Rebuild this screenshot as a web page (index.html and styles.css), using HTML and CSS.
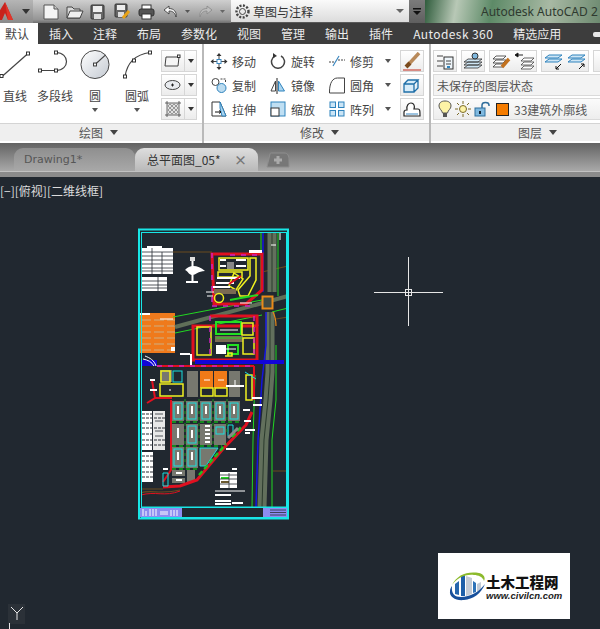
FILE: index.html
```html
<!DOCTYPE html>
<html lang="zh">
<head>
<meta charset="utf-8">
<title>AutoCAD</title>
<link rel="stylesheet" href="styles.css">
</head>
<body>
<div class="app">
  <header class="titlebar">
    <div class="appbtn">
      <svg width="14" height="22" viewBox="0 0 14 22"><path d="M-6 19 L5 1 L13 19 L8 19 L5 12 L2 19Z" fill="#c8221c"/><path d="M5 1 L13 19 L8 19Z" fill="#e2352a"/></svg>
      <svg class="appcaret" width="8" height="5" viewBox="0 0 8 5"><path d="M0 0H8L4 5Z" fill="#333"/></svg>
    </div>
    <div class="qat">
      <svg width="18" height="16" viewBox="0 0 18 16"><path d="M2 1H12L16 5V15H2Z" fill="#f4f4f4" stroke="#555"/><path d="M12 1V5H16" fill="#ccc" stroke="#555"/></svg>
      <svg width="18" height="16" viewBox="0 0 18 16"><path d="M1 14V3H6L8 5H14V14Z" fill="#d8d8d8" stroke="#444"/><path d="M1 14L4 7H17L14 14Z" fill="#f0f0f0" stroke="#444"/></svg>
      <svg width="15" height="16" viewBox="0 0 15 16"><rect x="1" y="1" width="13" height="14" rx="1" fill="#666" stroke="#333"/><rect x="3" y="2" width="9" height="6" fill="#eee"/><rect x="4" y="10" width="7" height="5" fill="#ddd"/></svg>
      <svg width="17" height="17" viewBox="0 0 17 17"><rect x="1" y="1" width="12" height="13" rx="1" fill="#666" stroke="#333"/><rect x="3" y="2" width="8" height="5" fill="#eee"/><rect x="4" y="9" width="6" height="5" fill="#ddd"/><path d="M9 15L15 8" stroke="#e8a317" stroke-width="3"/></svg>
      <svg width="17" height="16" viewBox="0 0 17 16"><rect x="4" y="1" width="9" height="5" fill="#fff" stroke="#333"/><rect x="1" y="5" width="15" height="7" rx="2" fill="#555" stroke="#333"/><rect x="4" y="10" width="9" height="5" fill="#fff" stroke="#333"/></svg>
      <span class="undo">
        <svg width="15" height="13" viewBox="0 0 15 13"><path d="M6 1L1 5L6 9V6C10 6 12 8 13 12C14 7 11 3.500 6 3.500Z" fill="#f4f4f4" stroke="#333" stroke-width=".8"/></svg>
        <svg width="5" height="3" viewBox="0 0 5 3"><path d="M0 0H5L2.500 3Z" fill="#555"/></svg>
      </span>
      <span class="redo">
        <svg width="15" height="13" viewBox="0 0 15 13"><path d="M9 1L14 5L9 9V6C5 6 3 8 2 12C1 7 4 3.500 9 3.500Z" fill="#bdbdbd" stroke="#888" stroke-width=".8"/></svg>
        <svg width="5" height="3" viewBox="0 0 5 3"><path d="M0 0H5L2.500 3Z" fill="#666"/></svg>
      </span>
    </div>
    <div class="workspace">
      <svg width="17" height="17" viewBox="0 0 17 17"><circle cx="8.500" cy="8.500" r="3" fill="none" stroke="#444"/><circle cx="8.500" cy="8.500" r="6" fill="none" stroke="#444" stroke-width="2.400" stroke-dasharray="2 1.500"/></svg>
      <span class="wsname">草图与注释</span>
      <svg width="8" height="4" viewBox="0 0 8 4"><path d="M0 0H8L4 4Z" fill="#666"/></svg>
    </div>
    <div class="wsbtn"><svg width="8" height="7" viewBox="0 0 8 7"><rect width="8" height="1.500" fill="#111"/><path d="M0 3H8L4 7Z" fill="#111"/></svg></div>
    <div class="appname">Autodesk AutoCAD 2</div>
  </header>

  <nav class="tabs">
    <span class="tab active">默认</span><span class="tab">插入</span><span class="tab">注释</span><span class="tab">布局</span><span class="tab">参数化</span><span class="tab">视图</span><span class="tab">管理</span><span class="tab">输出</span><span class="tab">插件</span><span class="tab wide">Autodesk 360</span><span class="tab">精选应用</span>
    <span class="tabend"></span>
  </nav>

  <section class="ribbon">
    <div class="panel draw">
      <div class="panelbody drawbody">
        <div class="tool">
          <svg width="30" height="30" viewBox="0 0 30 30"><path d="M2 27L28 4" class="ln"/><rect x="0" y="25" width="3" height="3" class="nd"/><rect x="26.500" y="2.500" width="3" height="3" class="nd"/></svg>
          <span>直线</span>
        </div>
        <div class="tool">
          <svg width="36" height="30" viewBox="0 0 36 30"><path d="M3 21H19M19 21C33 21 33 3 19 3" class="ln"/><rect x="1.500" y="19.500" width="3" height="3" class="nd"/><rect x="17.500" y="19.500" width="3" height="3" class="nd"/><rect x="17.500" y="1.500" width="3" height="3" class="nd"/></svg>
          <span>多段线</span>
        </div>
        <div class="tool">
          <svg width="32" height="32" viewBox="0 0 32 32"><defs><linearGradient id="cg" x1="0" y1="0" x2="1" y2="1"><stop offset="0" stop-color="#fff"/><stop offset="1" stop-color="#c4cad2"/></linearGradient></defs><circle cx="16" cy="16" r="14.500" fill="url(#cg)" stroke="#444"/><path d="M16 16L27 6" class="ln"/><rect x="14.500" y="14.500" width="3" height="3" class="nd"/></svg>
          <span>圆</span><i class="caret"></i>
        </div>
        <div class="tool arc">
          <svg width="32" height="30" viewBox="0 0 32 30"><path d="M4 27C6 14 14 5 29 3" class="ln"/><rect x="2.500" y="25.500" width="3" height="3" class="nd"/><rect x="27.500" y="1.500" width="3" height="3" class="nd"/><rect x="11.500" y="9.500" width="3" height="3" class="nd"/></svg>
          <span>圆弧</span><i class="caret"></i>
        </div>
        <div class="sidecol">
          <div class="sbtn split"><b><svg width="17" height="14" viewBox="0 0 17 14"><path d="M2 3H15L14 12H1Z" fill="#f5f5f5" stroke="#444"/><rect x="13.500" y="1" width="2.500" height="2.500" class="nd"/></svg></b><em></em></div>
          <div class="sbtn split"><b><svg width="17" height="12" viewBox="0 0 17 12"><ellipse cx="8.500" cy="6" rx="7.500" ry="4.500" fill="#e8ebef" stroke="#444"/><path d="M7 6H10M8.500 4.500V7.500" stroke="#222"/></svg></b><em></em></div>
          <div class="sbtn split"><b><svg width="16" height="16" viewBox="0 0 16 16"><rect x="2" y="2" width="12" height="12" fill="#e2e2e2"/><path d="M0 2H16M0 14H16M2 0V16M14 0V16" stroke="#444" stroke-width=".8" fill="none"/><path d="M3 13L13 3M3 9L9 3M7 13L13 7M3 5L5 3M11 13L13 11M5 3L13 11M3 5L11 13M3 9L7 13M9 3L13 7" stroke="#666" stroke-width=".6" fill="none"/></svg></b><em></em></div>
        </div>
      </div>
      <footer class="paneltitle t-draw">绘图<i class="caret dark"></i></footer>
    </div>

    <div class="panel modify">
      <div class="panelbody modbody">
        <div class="modgrid">
          <div class="mod"><svg width="17" height="17" viewBox="0 0 17 17"><path d="M8.500 1V16M1 8.500H16" stroke="#444"/><path d="M8.500 0L6 3H11ZM8.500 17L6 14H11ZM0 8.500L3 6V11ZM17 8.500L14 6V11Z" fill="#333"/><rect x="6.500" y="6.500" width="4" height="4" fill="#fff" stroke="#3a87c0"/></svg><span>移动</span></div>
          <div class="mod"><svg width="16" height="16" viewBox="0 0 16 16"><path d="M5 3A6.500 6.500 0 1 0 11 3" fill="none" stroke="#444" stroke-width="1.500"/><path d="M3 0L7 3L3 5Z" fill="#333"/></svg><span>旋转</span></div>
          <div class="mod"><svg width="18" height="12" viewBox="0 0 18 12"><path d="M1 7H6M10 5H17" stroke="#444" stroke-dasharray="2 1"/><path d="M5 11L11 1" stroke="#3a87c0" stroke-width="1.200"/></svg><span>修剪</span><i class="caret"></i></div>
          <div class="mod"><svg width="17" height="17" viewBox="0 0 17 17"><circle cx="5" cy="5" r="3.500" fill="#fff" stroke="#444"/><circle cx="11" cy="11" r="4.500" fill="#bcdcf0" stroke="#2f83bd"/><path d="M10 2H15V6" stroke="#444" fill="none" stroke-dasharray="2 1"/></svg><span>复制</span></div>
          <div class="mod"><svg width="16" height="17" viewBox="0 0 16 17"><path d="M7 1V17" stroke="#222"/><path d="M5.500 14H1L5.500 4Z" fill="#fff" stroke="#444"/><path d="M8.500 14H14.500L8.500 4Z" fill="#a9d4ef" stroke="#2f83bd"/></svg><span>镜像</span></div>
          <div class="mod"><svg width="17" height="17" viewBox="0 0 17 17"><path d="M16 1H9C4 1 1 6 1 15V16H16Z" fill="#fff" stroke="#444"/></svg><span>圆角</span><i class="caret"></i></div>
          <div class="mod"><svg width="16" height="16" viewBox="0 0 16 16"><path d="M1 1H9L15 15H1Z" fill="#fff" stroke="#333"/><path d="M9 1L15 15H11L9 7Z" fill="#a9d4ef" stroke="#2f83bd"/><path d="M4 11H10M8 9.500L10 11L8 12.500" stroke="#111" fill="none"/></svg><span>拉伸</span></div>
          <div class="mod"><svg width="16" height="16" viewBox="0 0 16 16"><rect x="1" y="1" width="14" height="14" fill="#bfdff3" stroke="#2f83bd"/><rect x="1" y="7" width="8" height="8" fill="#fff" stroke="#333"/></svg><span>缩放</span></div>
          <div class="mod"><svg width="16" height="16" viewBox="0 0 16 16"><g fill="#cbe5f6" stroke="#2f83bd"><rect x="1" y="1" width="5.500" height="5.500"/><rect x="9.500" y="1" width="5.500" height="5.500"/><rect x="1" y="9.500" width="5.500" height="5.500"/><rect x="9.500" y="9.500" width="5.500" height="5.500"/></g></svg><span>阵列</span><i class="caret"></i></div>
        </div>
        <div class="sidecol narrow">
          <div class="sbtn"><svg width="20" height="19" viewBox="0 0 20 19"><path d="M17 1L6 13" stroke="#b98a5a" stroke-width="3.500"/><path d="M8 11L4 15" stroke="#7a4a1c" stroke-width="4"/><path d="M1 18H19" stroke="#c42a1c"/></svg></div>
          <div class="sbtn"><svg width="18" height="16" viewBox="0 0 18 16"><path d="M1 7H11V15H1ZM1 7L5 3H15L11 7M15 3V11L11 15" fill="#d7ecf9" stroke="#1f6fa8" stroke-width="1.300"/></svg></div>
          <div class="sbtn"><svg width="18" height="15" viewBox="0 0 18 15"><path d="M1 14V10C1 8 3 8 4 8C3 3 6 1 8 1C11 1 12 4 11 7H15C17 7 17 9 17 14Z" fill="#fff" stroke="#222" stroke-width="1.200"/><path d="M3 12H15" stroke="#3a87c0"/></svg></div>
        </div>
      </div>
      <footer class="paneltitle t-mod">修改<i class="caret dark"></i></footer>
    </div>

    <div class="panel layers">
      <div class="panelbody laybody">
        <div class="layrow">
          <div class="sbtn"><svg width="18" height="18" viewBox="0 0 18 18"><rect x="8" y="5" width="9" height="12" fill="#eef5fa" stroke="#333"/><path d="M1 4H7M1 9H7M1 14H7M10 9H15M10 12H15" stroke="#444"/><rect x="11" y="14" width="3" height="2" fill="#2f83bd"/></svg></div>
          <div class="sbtn"><svg width="20" height="18" viewBox="0 0 20 18"><path d="M1 16L5 13H19L15 16ZM1 13L5 10H19L15 13ZM1 10L5 7H19L15 10Z" fill="#cfe6f5" stroke="#333" stroke-width=".8"/><circle cx="12" cy="4" r="3" fill="#7fb7dd" stroke="#333"/></svg></div>
          <div class="sbtn joined"><svg width="20" height="18" viewBox="0 0 20 18"><path d="M1 7L4 4H14L11 7ZM1 11L4 8H14L11 11ZM1 15L4 12H14L11 15Z" fill="#fff" stroke="#333" stroke-width=".8"/><path d="M10 15L17 7" stroke="#c2711e" stroke-width="3.500"/></svg><svg width="20" height="18" viewBox="0 0 20 18"><path d="M3 1L0 3L3 5ZM3 3H8" stroke="#222"/><path d="M6 9L9 6H19L16 9ZM6 13L9 10H19L16 13ZM6 17L9 14H19L16 17Z" fill="#fff" stroke="#444" stroke-width=".8"/></svg></div>
          <div class="sbtn joined"><svg width="20" height="18" viewBox="0 0 20 18"><path d="M1 6L5 3H18L14 6ZM1 10L5 7H18L14 10Z" fill="#cfe6f5" stroke="#2f83bd"/><path d="M17 12L12 17M12 14V17H15" stroke="#111" fill="none"/></svg><svg width="20" height="18" viewBox="0 0 20 18"><path d="M1 6L5 3H18L14 6ZM1 10L5 7H18L14 10Z" fill="#cfe6f5" stroke="#2f83bd"/><path d="M12 17L17 12M14 12H17V15" stroke="#111" fill="none"/></svg></div>
          <div class="sbtn last"></div>
        </div>
        <div class="laycombo">未保存的图层状态</div>
        <div class="laycombo state">
          <svg width="14" height="18" viewBox="0 0 14 18"><path d="M7 1C3 1 1 3 1 6C1 9 4 10 4.500 13H9.500C10 10 13 9 13 6C13 3 11 1 7 1Z" fill="#fdf3a6" stroke="#555"/><rect x="5" y="13" width="4" height="4" fill="#555"/></svg>
          <svg width="16" height="16" viewBox="0 0 16 16"><circle cx="8" cy="8" r="3.500" fill="#fdf3a6" stroke="#7b6b2a"/><path d="M8 0V3M8 13V16M0 8H3M13 8H16M2 2L4 4M12 12L14 14M14 2L12 4M4 12L2 14" stroke="#7b6b2a"/></svg>
          <svg width="17" height="16" viewBox="0 0 17 16"><path d="M8 7V4C8 0.500 15 0.500 15 4V5" fill="none" stroke="#2f6e9c" stroke-width="1.500"/><rect x="1" y="7" width="10" height="8" fill="#7fb9e0" stroke="#2f6e9c"/><rect x="5" y="10" width="2" height="3" fill="#123"/></svg>
          <span class="swatch"></span>
          <span class="layname">33建筑外廓线</span>
        </div>
      </div>
      <footer class="paneltitle t-lay">图层<i class="caret dark"></i></footer>
    </div>
  </section>

  <div class="docbar">
    <div class="doctab">Drawing1*</div>
    <div class="doctab current"><span>总平面图_05*</span><span class="close">×</span></div>
    <svg class="newtab" width="24" height="16" viewBox="0 0 24 16"><path d="M1 15L4 2C4 1 5 1 6 1H18C22 1 23 4 23 8V15Z" fill="#777" stroke="#8e8e8e"/><path d="M12 4V12M8 8H16" stroke="#aaa" stroke-width="3"/></svg>
  </div>
  <div class="docstrip"></div>

  <main class="viewport">
    <div class="viewlabel">[−][俯视][二维线框]</div>
    <svg class="plan" width="600" height="452" viewBox="0 177 600 452">
      <!-- crosshair -->
      <path d="M374 292.500H443M408.500 257V326" class="cross"/>
      <rect x="405.500" y="289.500" width="6" height="6" class="crossbox"/>

      <!-- UCS -->
      <rect x="8" y="604" width="17" height="20" fill="#2b3138"/>
      <path d="M11 607L17 613L23 607M17 613V620M9.500 623V629" class="cross"/>

      <!-- tables and white notes -->
      <rect x="141" y="248" width="32" height="26" fill="#fff"/>
      <rect x="147" y="246" width="15" height="2" fill="#fff"/>
      <path d="M141 252H173M141 256H173M141 260H173M141 264H173M141 268H173M141 271H173M152 248V274M162 252V274" class="darkln"/>
      <rect x="141" y="277" width="26" height="14" fill="#fff"/>
      <path d="M141 281H167M141 285H167M141 288H167M158 277V291" class="darkln"/>
      <rect x="142" y="411" width="10" height="39" fill="#fff"/>
      <rect x="153" y="411" width="12" height="39" fill="#e8e8e8"/>
      <rect x="142" y="452" width="11" height="30" fill="#fff"/>
      <path d="M142 414H152M142 418H165M142 423H152M142 428H165M142 434H152M142 440H165M142 445H165M142 456H153M142 461H153M142 467H153M142 472H153M142 477H153" class="darkdash"/>
      <path d="M155 414H163M155 421H163M155 431H163M155 436H163" class="darkln"/>

      <!-- orange schedule -->
      <rect x="140" y="313" width="35" height="40" fill="#ef7a1c"/>
      <path d="M141 320H175M141 326H175M141 332H175M141 338H175M141 344H175M141 350H175" class="orangeln"/>
      <rect x="171" y="347" width="4" height="4" fill="#fff"/>
      <rect x="140" y="313" width="10" height="2" fill="#fff"/>
      <path d="M160 319H173" class="wht1"/>

      <!-- north arrow -->
      <path d="M192.500 258V282M186 282H198" class="wht2"/>
      <rect x="190" y="257" width="5" height="4" fill="#ddd"/>
      <path d="M185 270C190 264 198 265 205 271C198 271 196 275 192 275C189 275 188 271 185 270Z" fill="#fff"/>

      <!-- terrain lines -->
      <path d="M173 252H212M262 272L288 266M270 320L288 317M273 471H286" class="brown"/>
      <path d="M175 327L288 296" class="roadband"/>
      <path d="M173 317L262 300M175 333L262 315M272 312L288 308" class="grn1"/>

      <!-- main vertical road -->
      <path d="M272 232V292M270 312V372L268 400L264 440L262 507" class="roadwide"/>
      <path d="M272 232V292M270 312V372L268 400L264 440L262 507" class="roadmark"/>
      <path d="M261 232V290M255 375L253 440L252 507M278 232V296M276 345V400L272 440L272 507" class="grn1"/>
      <path d="M263 232V292M266 312V345L262 380L258 440L256 507" class="blue2"/>
      <path d="M280 232V240M271 245H276" class="wht1"/>

      <!-- top block -->
      <path d="M212 254H262V290L246 304H214Z" class="redthick3"/>
      <path d="M219 258H248V270H219Z" class="yel"/>
      <rect x="227" y="262" width="7" height="7" fill="#888"/>
      <path d="M220 260H226M236 260H246M220 266H226M236 266H246" class="wht2"/>
      <rect x="218" y="272" width="24" height="5" class="yel"/>
      <path d="M250 258H256V280L248 296H240L238 290L250 276Z" class="yel"/>
      <path d="M234 273L243 279L236 290L229 286Z" class="yel"/>
      <path d="M217 278H240M216 283H234M213 287H230" class="wht2"/>
      <rect x="214" y="289" width="22" height="5" fill="#7a6a52"/>
      <circle cx="219" cy="298" r="4.500" class="yel"/>
      <path d="M206 292H214M207 296H213M240 303H252" class="wht1"/>
      <path d="M230 300L258 295" class="grn2"/>
      <path d="M229 284L241 276" class="redthick"/>
      <path d="M212 253V306M212 306H250" class="mag"/>
      <rect x="249" y="250" width="13" height="3" fill="#fff"/>
      <path d="M230 255H262" class="mag"/>

      <!-- intersection -->
      <rect x="262.500" y="296.500" width="10" height="12" class="orangebox"/>
      <path d="M273 312C276 318 276 322 276 326" class="orangeln2"/>

      <!-- middle block -->
      <rect x="193" y="326" width="64" height="34" class="redthick3"/>
      <path d="M210 316H257V326" class="redthick3"/>
      <rect x="197" y="327" width="14" height="28" class="yel"/>
      <rect x="216" y="322" width="25" height="12" class="grnbox"/>
      <rect x="215" y="336" width="28" height="6" fill="#7a6a52"/>
      <path d="M216 338H242" class="grn1"/>
      <rect x="242" y="323" width="11" height="12" class="yel"/>
      <rect x="216" y="345" width="10" height="9" fill="#fff"/>
      <rect x="228" y="345" width="10" height="9" class="grnbox"/>
      <path d="M243 338H254V354H243Z" class="yel"/>
      <path d="M225 356H232V353H228V356" class="yel"/>
      <path d="M210 316V360M254 316V360" class="mag"/>
      <path d="M220 330H238M222 349H236" class="wht1"/>

      <!-- blue band -->
      <path d="M195 362H284" class="blue4"/>
      <rect x="141" y="360" width="16" height="6" fill="#1205d8"/>
      <path d="M145 356C150 358 154 360 156 366M143 359C148 360 152 362 154 366" class="wht1"/>
      <path d="M180 354H190M191 354V366" class="wht2"/>

      <!-- row 1 -->
      <path d="M157 366H254" class="redthick"/>
      <path d="M254 366V400" class="redthick"/>
      <path d="M157 366H254" class="mag"/>
      <g class="gry"><rect x="187" y="371" width="11" height="26"/><rect x="229" y="371" width="11" height="26"/><rect x="160" y="370" width="12" height="12"/></g>
      <rect x="200" y="371" width="13" height="17" fill="#f07a18"/>
      <rect x="214" y="371" width="13" height="17" fill="#f07a18"/>
      <rect x="201" y="388" width="12" height="8" class="yel"/>
      <rect x="215" y="388" width="12" height="8" class="yel"/>
      <rect x="160" y="384" width="23" height="12" class="yel"/>
      <rect x="161" y="371" width="9" height="11" class="yel"/>
      <rect x="173" y="371" width="9" height="11" class="cyn"/>
      <path d="M204 380H210M218 380H224M170 389V391M235 380V386" class="wht1"/>
      <path d="M226 386H244" class="wht2"/>
      <path d="M246 375H252V400H246Z" class="yel"/>
      <path d="M245 372L256 379" class="cyn"/>

      <!-- rows 2 to 5 -->
      <g class="gry">
        <rect x="172" y="401" width="12" height="20"/><rect x="186" y="401" width="12" height="20"/><rect x="200" y="401" width="12" height="20"/><rect x="214" y="401" width="12" height="20"/><rect x="228" y="401" width="12" height="20"/>
        <rect x="172" y="424" width="12" height="21"/><rect x="186" y="424" width="12" height="21"/><rect x="200" y="424" width="12" height="21"/><rect x="214" y="424" width="12" height="21"/>
        <rect x="172" y="447" width="12" height="21"/><rect x="186" y="447" width="12" height="21"/>
        <path d="M200 448H218L206 466H200Z"/>
        <rect x="172" y="470" width="13" height="6"/><rect x="172" y="478" width="13" height="5"/><rect x="187" y="470" width="8" height="12"/>
      </g>
      <g class="cyn">
        <rect x="174" y="403" width="8" height="16"/><rect x="188" y="403" width="8" height="16"/><rect x="202" y="403" width="8" height="16"/><rect x="216" y="403" width="8" height="16"/><rect x="230" y="403" width="8" height="16"/>
        <rect x="188" y="426" width="8" height="17"/><rect x="216" y="427" width="8" height="7"/>
        <rect x="174" y="449" width="8" height="17"/><rect x="188" y="449" width="8" height="17"/>
        <path d="M200 448H218L206 466H200Z"/>
        <path d="M228 425H233V436H228Z"/>
      </g>
      <path d="M178 406V414M192 406V414M206 406V414M220 406V414M234 406V414M178 428V438M192 430V438M178 452V460M192 452V460M205 426H210M205 430H210M205 434H210M205 438H210M205 442H210M176 473H182M176 480H182" class="wht2"/>
      <path d="M172 422H240M172 446H222M172 469H198" class="grn2dash"/>
      <path d="M171 400V470L163 482" class="redthick"/>
      <path d="M185 399V470M199 399V448M213 399V445M227 399V435" class="grn1dash"/>

      <!-- red diagonal boundary -->
      <path d="M163 487L180 486L197 480L222 450L246 425L252 412" class="redthick3"/>
      <path d="M199 475L226 444M232 437L242 426" class="grn3"/>
      <path d="M228 438L238 428" class="gryln"/>
      <path d="M152 380L155 398L147 403M155 398L172 398" class="redthick"/>
      <path d="M150 380H155M150 390H157" class="wht2"/>
      <path d="M163 473V486H168V473Z" class="cyn"/>
      <path d="M141 489H163M141 493C150 489 160 495 180 490" class="brown"/>
      <path d="M141 495C155 491 165 497 180 491" class="redthin"/>

      <!-- small white labels -->
      <path d="M252 398H262M253 405H262M243 410H250M244 421H251M236 449H226M245 430H255M245 433H250M232 469H237M163 469H168" class="wht2"/>

      <!-- legend -->
      <rect x="220" y="472" width="17" height="16" fill="#fff"/>
      <path d="M221 478H229" class="grn2"/>
      <path d="M221 482H229" class="brown2"/>
      <path d="M229 473V488M220 475H237M220 479H237M220 484H237" class="darkln"/>
      <path d="M215 491H245" class="wht1"/>
      <path d="M215 495H231M215 501H231M215 504H231M232 503H243" class="wht2"/>

      <!-- frame -->
      <rect x="139" y="229.500" width="149" height="289" class="frame2"/>
      <rect x="141.500" y="232.500" width="145" height="274.500" class="frame1"/>
      <path d="M141 507.500H287M141 517.500H287" class="frame1"/>

      <!-- title block -->
      <rect x="140" y="508" width="42" height="9" fill="#8c8cf0"/>
      <path d="M143 509V516M146 511V516M150 509V516M153 509V516M156 509V516M160 512H168M160 514H168M171 510V516M174 510V516M177 510V516" class="wht1"/>
      <rect x="263" y="508" width="24" height="9" fill="#8c8cf0"/>
      <path d="M270 510H286M270 512.500H286M270 515H286" class="darkln"/>
    </svg>

    <aside class="watermark">
      <svg class="wmlogo" width="37" height="30" viewBox="0 0 37 30">
        <path d="M6 22V12L10 9V23Z" fill="#2566ad"/><path d="M12 24V4L16 3V24Z" fill="#1d5fa9"/><path d="M17 4L23 6V22L17 24Z" fill="#c4ccd6"/><path d="M24 21V9L27 11V20Z" fill="#2f73b8"/><path d="M28 20V12L32 10V17Z" fill="#c4ccd6"/>
        <path d="M3 13C8 3 18 -1 30 1C34 2 37 5 35 9C34 5 29 3 25 3C16 2 8 6 3 13Z" fill="#8cba2c"/>
        <path d="M1 19C0 25 7 29 15 28C24 27 32 22 36 12C30 20 21 25 12 25C6 25 2 22 3 14C2 15 1 17 1 19Z" fill="#174f9b"/>
      </svg>
      <div class="wmtext"><strong>土木工程网</strong><em>www.civilcn.com</em></div>
    </aside>
  </main>
</div>
</body>
</html>
```

FILE: styles.css
```css
* { box-sizing: border-box; }
html, body { margin: 0; padding: 0; background: #212830; }
body { font-family: "Noto Sans CJK SC", "Liberation Sans", sans-serif; font-size: 12px; color: #444; }
.app { width: 600px; height: 629px; overflow: hidden; display: flex; flex-direction: column; }

/* title bar */
.titlebar { height: 23px; display: flex; align-items: stretch; background: #5a5a5a; flex: none; }
.appbtn { width: 33px; display: flex; align-items: center; gap: 8px; background: linear-gradient(#b5b5b5, #8a8a8a); }
.qat { width: 198px; display: flex; align-items: center; padding-left: 9px; gap: 6px; background: linear-gradient(#cfcfcf, #959595 85%, #6e6e6e); }
.qat svg { flex: none; }
.qat > svg:nth-child(4) { margin-left: 3px; }
.qat > svg:nth-child(5) { margin-left: 1px; }
.undo, .redo { display: flex; align-items: center; gap: 7px; }
.undo { margin-left: 2px; }
.redo { margin-left: 2px; }
.workspace { width: 178px; height: 22px; display: flex; align-items: center; padding: 0 5px 0 3px; gap: 2px; background: linear-gradient(#fafafa, #dcdcdc); }
.wsname { flex: 1; font-size: 12px; color: #333; }
.wsbtn { width: 16px; display: flex; align-items: center; justify-content: center; background: linear-gradient(#7b7b7b, #5f5f5f); }
.appname { flex: 1; padding-left: 56px; line-height: 23px; color: #2f3a30; font-family: "Noto Sans", sans-serif; font-size: 12px; white-space: nowrap; overflow: hidden; background: linear-gradient(100deg, #2f5c3c, #b8c8b6 18%, #5d8a67 38%, #a8b9a4 70%, #6d8a70); }

/* ribbon tabs */
.tabs { height: 21px; flex: none; display: flex; align-items: stretch; background: #3d3d3d; color: #ececec; line-height: 21px; }
.tab { margin-right: 20px; white-space: nowrap; }
.tab.wide { letter-spacing: .42px; }
.tab.active { width: 38px; margin: 0 11px 0 0; padding-left: 5px; background: #fff; color: #444; }
.tabend { position: relative; flex: 1; }
.tabend::after { content: ""; position: absolute; right: 0; top: 9px; width: 7px; height: 5px; background: #e8e8e8; border-radius: 2px 0 0 2px; }

/* ribbon */
.ribbon { height: 99px; flex: none; display: flex; background: #fff; }
.panel { display: flex; flex-direction: column; border-right: 2px solid #b9b9b9; }
.panel.draw { width: 204px; }
.panel.modify { width: 227px; }
.panel.layers { flex: 1; border-right: 0; min-width: 0; }
.panelbody { height: 81px; display: flex; }
.paneltitle { flex: 1; display: flex; align-items: center; background: #efefef; border-top: 1px solid #d4d4d4; border-bottom: 2px solid #fff; color: #555; gap: 7px; }
.t-draw { padding-left: 79px; }
.t-mod { padding-left: 96px; }
.t-lay { padding-left: 87px; }

.drawbody { padding-top: 5px; }
.tool { width: 50px; display: flex; flex-direction: column; align-items: center; }
.tool:nth-child(1) { width: 30px; }
.tool:nth-child(3) { width: 30px; }
.tool:nth-child(4) { width: 51px; padding-left: 3px; }
.tool svg { height: 31px; }
.tool span { line-height: 18px; margin-top: 7px; white-space: nowrap; }
.caret { display: block; width: 0; height: 0; border: 3px solid transparent; border-top: 4px solid #555; border-bottom: 0; }
.caret.dark { border-width: 4px; border-top-width: 5px; border-bottom-width: 0; border-top-color: #444; }
.tool .caret { margin-top: 3px; }
.ln { fill: none; stroke: #444; stroke-width: 1.200; }
.nd { fill: #fff; stroke: #333; stroke-width: 1; }

.sidecol { display: flex; flex-direction: column; gap: 2px; padding-top: 1px; }
.sbtn { width: 36px; height: 22px; flex: none; display: flex; align-items: center; justify-content: center; border: 1px solid #d6d6d6; background: linear-gradient(#fff, #ececec); }
.sbtn.split { display: grid; grid-template-columns: 23px 12px; }
.sbtn.split b { height: 20px; display: flex; align-items: center; justify-content: center; border-right: 1px solid #d6d6d6; }
.sbtn.split em { width: 0; height: 0; margin-left: 3px; border: 3px solid transparent; border-top: 4px solid #333; border-bottom: 0; }
.sidecol.narrow { margin-top: 6px; margin-left: 7px; padding-top: 0; }
.sidecol.narrow .sbtn { width: 24px; }

.modbody { padding-left: 6px; }
.modgrid { display: grid; grid-template-columns: 59px 59px 1fr; grid-template-rows: repeat(3, 24px); width: 183px; margin-top: 5px; }
.mod { display: flex; align-items: center; gap: 4px; white-space: nowrap; }
.mod svg { width: 18px; flex: none; }
.mod .caret { margin-left: 7px; }

.laybody { flex-direction: column; padding: 6px 0 0 2px; gap: 2px; }
.layrow { display: flex; gap: 4px; height: 22px; }
.layrow .sbtn { width: 24px; flex: none; }
.layrow .sbtn.joined { width: 48px; gap: 3px; }
.layrow .sbtn.last { width: 24px; }
.laycombo { height: 22px; width: 180px; display: flex; align-items: center; padding-left: 3px; border: 1px solid #dadada; background: #f3f3f3; color: #555; white-space: nowrap; }
.laycombo.state { gap: 3px; padding-left: 4px; background: linear-gradient(#fbfbfb, #ededed); }
.swatch { width: 13px; height: 13px; background: #f57c00; border: 1px solid #222; flex: none; margin-left: 2px; }
.layname { margin-left: 2px; }

/* document tabs */
.docbar { height: 28px; flex: none; display: flex; align-items: flex-end; padding-left: 14px; background: linear-gradient(#636363, #a9a9a9); }
.doctab { width: 121px; height: 23px; padding-left: 10px; line-height: 23px; border-radius: 9px 9px 0 0; background: linear-gradient(#8f8f8f, #a8a8a8); color: #565656; font-family: "DejaVu Sans", sans-serif; font-size: 11px; }
.doctab.current { width: 123px; display: flex; justify-content: space-between; padding: 0 11px 0 12px; background: linear-gradient(#dedede, #b9b9b9); color: #333; font-family: "Noto Sans CJK SC", sans-serif; font-size: 12px; }
.close { color: #777; font-weight: 700; font-size: 13px; }
.newtab { margin-left: 8px; margin-bottom: 3px; }
.docstrip { height: 6px; flex: none; background: #8b8b8b; border-top: 1px solid #c2c2c2; }

/* canvas */
.viewport { position: relative; flex: 1; min-height: 0; background: #212830; }
.plan { display: block; }
.viewlabel { position: absolute; left: 0; top: 6px; color: #dcdcdc; font-size: 12px; line-height: 16px; white-space: nowrap; }
.cross { fill: none; stroke: #e6e6e6; stroke-width: 1; }
.crossbox { fill: none; stroke: #e6e6e6; stroke-width: 1; }
.frame1 { fill: none; stroke: #18e6e6; stroke-width: 1; }
.frame2 { fill: none; stroke: #18e6e6; stroke-width: 2; }
.darkln { fill: none; stroke: #2a2f36; stroke-width: .8; }
.darkdash { fill: none; stroke: #2a2f36; stroke-width: 1; stroke-dasharray: 3 1; }
.orangeln { fill: none; stroke: #c7bda0; stroke-width: .8; stroke-dasharray: 10 3; }
.orangeln2 { fill: none; stroke: #e88a1a; stroke-width: 1.200; }
.orangebox { fill: #3f4a44; stroke: #e88a1a; stroke-width: 2; }
.wht1 { fill: none; stroke: #fff; stroke-width: 1; }
.wht2 { fill: none; stroke: #fff; stroke-width: 2; }
.brown { fill: none; stroke: #6b4a1e; stroke-width: 1.200; }
.brown2 { fill: none; stroke: #6b5a30; stroke-width: 2; }
.roadband { fill: none; stroke: #5f6f58; stroke-width: 4; }
.roadwide { fill: none; stroke: #62705c; stroke-width: 9; }
.roadmark { fill: none; stroke: #2a3a2c; stroke-width: 1; }
.grn1 { fill: none; stroke: #22d822; stroke-width: 1; }
.grn1dash { fill: none; stroke: #1a9a1a; stroke-width: 1; stroke-dasharray: 3 3; }
.grn2 { fill: none; stroke: #22d822; stroke-width: 2; }
.grn2dash { fill: none; stroke: #148a1e; stroke-width: 2; stroke-dasharray: 4 3; }
.grn3 { fill: none; stroke: #20c020; stroke-width: 2.500; stroke-dasharray: 5 3; }
.gryln { fill: none; stroke: #8a8a8a; stroke-width: 3; }
.blue2 { fill: none; stroke: #1414e0; stroke-width: 1.500; }
.blue4 { fill: none; stroke: #1205d8; stroke-width: 4; }
.redthick { fill: none; stroke: #e01020; stroke-width: 2; }
.redthick3 { fill: none; stroke: #e01020; stroke-width: 3; }
.redthin { fill: none; stroke: #e01020; stroke-width: 1; }
.mag { fill: none; stroke: #d020c0; stroke-width: 1.500; stroke-dasharray: 5 6; }
.yel { fill: none; stroke: #f0f020; stroke-width: 1.500; }
.cyn, .cyn rect, .cyn path { fill: none; stroke: #18e0e0; stroke-width: 1; }
.gry { fill: #77786f; }
.grnbox { fill: none; stroke: #22e022; stroke-width: 2; }

/* watermark */
.watermark { position: absolute; left: 438px; top: 376px; width: 132px; height: 66px; display: flex; align-items: flex-start; padding: 19px 0 0 11px; background: #fff; }
.wmlogo { flex: none; }
.wmtext { display: flex; flex-direction: column; margin-top: 2px; }
.wmtext strong { font-size: 14.500px; line-height: 15px; color: #111; white-space: nowrap; font-weight: 900; }
.wmtext em { margin-top: 2px; font-family: "Liberation Sans", sans-serif; font-size: 9.500px; line-height: 9px; color: #222; font-weight: 700; white-space: nowrap; }
```
